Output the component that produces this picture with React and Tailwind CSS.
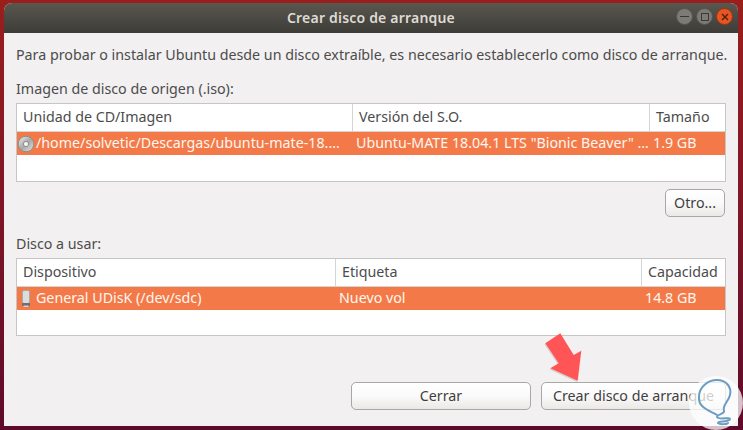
import React from "react";

const font = { fontFamily: '"Noto Sans", "Open Sans", sans-serif' };

function Table({ cols, header, row, icon, mb, empty }) {
  return (
    <div className={`border border-[#c8c6c4] bg-white ${mb}`}>
      <div className="flex h-[28px] border-b border-[#d6d4d2] text-[#4c4c4c]">
        {header.map((h, i) => (
          <div key={h} className={`${cols[i]} pl-[6px] flex items-center ${i < 2 ? "border-r border-[#d6d4d2]" : ""}`}>
            {h}
          </div>
        ))}
      </div>
      <div className="flex h-[23px] bg-[#f37a48] text-[#fff6f0] items-center">
        {row.map((c, i) => (
          <div key={c} className={`${cols[i]} flex items-center ${i === 0 ? "" : "pl-[3px]"} whitespace-nowrap`}>
            {i === 0 && icon}
            <span>{c}</span>
          </div>
        ))}
      </div>
      <div className={empty} />
    </div>
  );
}

const Cd = (
  <svg width="18" height="18" viewBox="0 0 18 18" className="mr-px shrink-0">
    <defs>
      <linearGradient id="cdg" x1="0" y1="0" x2="1" y2="1">
        <stop offset="0" stopColor="#f2f2f2" />
        <stop offset="0.5" stopColor="#a8a8a8" />
        <stop offset="1" stopColor="#e6e6e6" />
      </linearGradient>
    </defs>
    <circle cx="9" cy="9" r="7.8" fill="url(#cdg)" stroke="#8d8d8d" strokeWidth="1" />
    <circle cx="9" cy="9" r="2.6" fill="#f4f4f4" stroke="#777" strokeWidth="0.8" />
  </svg>
);

const Usb = (
  <svg width="18" height="18" viewBox="0 0 18 18" className="mr-px shrink-0">
    <rect x="5.5" y="0.5" width="7" height="13" rx="1.5" fill="#dcdcdc" stroke="#a9a9a9" />
    <rect x="5" y="13" width="8" height="3" rx="0.5" fill="#6f6f6f" />
    <rect x="6.5" y="15.5" width="5" height="1.5" fill="#d0d0d0" />
  </svg>
);

function Btn({ w, children }) {
  return (
    <button className={`${w} h-[28px] rounded-[5px] border border-[#a9a7a4] bg-gradient-to-b from-white via-[#fbfafa] to-[#ebe9e7] text-[#3f3f3f] flex items-center justify-center`}>
      {children}
    </button>
  );
}

export default function App() {
  return (
    <div
      className="relative w-[743px] h-[430px] overflow-hidden bg-gradient-to-b from-[#9a1f1c] via-[#7f1526] to-[#5f0a2a] pt-[3px] pl-[4px]"
      style={font}
    >
      <div className="w-[734px] h-[423px] rounded-t-[8px] overflow-hidden bg-[#f2f0f1] text-[14.25px] leading-none">
        <div className="relative h-[30px] bg-gradient-to-b from-[#5a5750] to-[#3d3c37] flex items-center justify-center text-[14px] font-semibold text-[#dfdbd2] tracking-[0.2px]">
          Crear disco de arranque
          <div className="absolute right-[5px] top-[5px] flex gap-[3px]">
            <div className="w-[17px] h-[17px] rounded-full bg-[#7d7b75] border border-[#55534e] flex items-center justify-center">
              <div className="w-[9px] h-[1.5px] bg-[#3a3935]" />
            </div>
            <div className="w-[17px] h-[17px] rounded-full bg-[#7d7b75] border border-[#55534e] flex items-center justify-center">
              <div className="w-[8px] h-[8px] border border-[#3a3935]" />
            </div>
            <div className="w-[17px] h-[17px] rounded-full bg-[#e95420] border border-[#8a3a1c] flex items-center justify-center">
              <svg width="8" height="8" viewBox="0 0 8 8"><path d="M1 1 7 7M7 1 1 7" stroke="#4a2010" strokeWidth="1.4" /></svg>
            </div>
          </div>
        </div>

        <div className="pl-[12px] pr-[12px] text-[#4c4c4c]">
          <div className="pt-[15px] h-[38px] whitespace-nowrap">Para probar o instalar Ubuntu desde un disco extraíble, es necesario establecerlo como disco de arranque.</div>
          <div className="pt-[11px] h-[32px]">Imagen de disco de origen (.iso):</div>

          <Table
            cols={["w-[336px]", "w-[297px]", "flex-1"]}
            header={["Unidad de CD/Imagen", "Versión del S.O.", "Tamaño"]}
            row={["/home/solvetic/Descargas/ubuntu-mate-18.…", "Ubuntu-MATE 18.04.1 LTS \"Bionic Beaver\" …", "1.9 GB"]}
            icon={Cd}
            mb="mb-[7px]"
            empty="h-[26px]"
          />

          <div className="flex justify-end pr-px">
            <Btn w="w-[60px]">Otro...</Btn>
          </div>

          <div className="pt-[20px] h-[41px]">Disco a usar:</div>

          <Table
            cols={["w-[319px]", "w-[306px]", "flex-1"]}
            header={["Dispositivo", "Etiqueta", "Capacidad"]}
            row={["General UDisK (/dev/sdc)", "Nuevo vol", "14.8 GB"]}
            icon={Usb}
            mb="mb-[46px]"
            empty="h-[25px]"
          />

          <div className="flex justify-end gap-[10px]">
            <Btn w="w-[180px]">Cerrar</Btn>
            <Btn w="w-[185px]">Crear disco de arranque</Btn>
          </div>
        </div>
      </div>

      {/* Red annotation arrow */}
      <svg className="absolute left-[540px] top-[330px]" width="50" height="56" viewBox="0 0 50 56">
        <path d="M4.5 14.5 L19.5 4.5 L32.9 26.2 L40.5 21.9 L36.9 51.9 L9.5 39.5 L17.9 34.5 Z" fill="#8a6a6a" opacity="0.25" />
        <path d="M5.3 13.3 L20.3 3.3 L33.7 25 L41.3 20.7 L37.7 50.7 L10.3 38.3 L18.7 33.3 Z" fill="#ff5557" />
      </svg>

      {/* Watermark */}
      <div className="absolute left-[689px] top-[376px] w-[54px] h-[54px] rounded-full bg-white/75">
        <svg width="54" height="54" viewBox="0 0 54 54">
          <path
            d="M28 39 C19 34 9 31 10 21 C10 11 19 4 28 4 C37 4 43 11 41 19 C39 27 33 29 35 35 C36 38 28 38 28 41 C29 44 41 41 41 43 C39 47 29 44 29 47 C31 49 39 48 39 47"
            fill="none"
            stroke="#6a9cc4"
            strokeWidth="2"
            strokeLinecap="round"
          />
        </svg>
      </div>
    </div>
  );
}
